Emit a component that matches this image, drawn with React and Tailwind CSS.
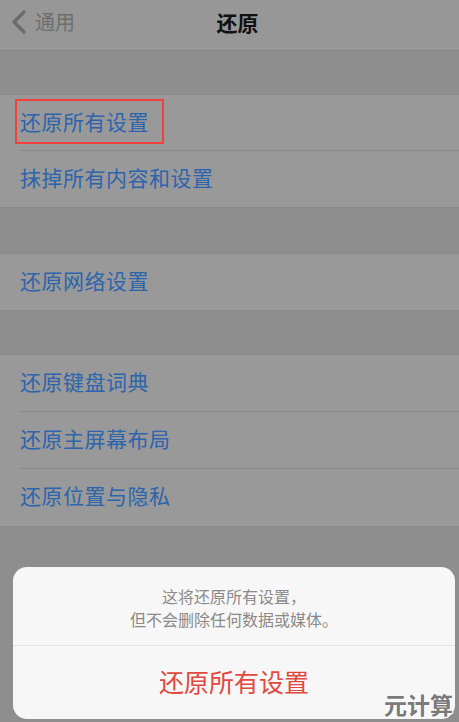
import React from "react";

const font = { fontFamily: '"Noto Sans CJK SC", "Noto Sans", sans-serif' };

function Row({ children, last, boxed, tall }) {
  return (
    <div className={`relative flex items-center pl-[20px] pb-[4px] ${tall ? "h-[57px]" : "h-[56px]"}`}>
      {boxed && (
        <div className="absolute left-[15px] top-[4px] w-[149px] h-[45px] border-[2px] border-[#f2403c]" />
      )}
      <span className="text-[21px] text-[#2c64ad] leading-none tracking-[0.5px]">{children}</span>
      {!last && <div className="absolute left-[19px] right-0 bottom-0 h-px bg-[#8b8b8b]" />}
    </div>
  );
}

function Group({ children }) {
  return <div className="bg-[#999999] border-y border-[#8a8a8a]">{children}</div>;
}

export default function App() {
  return (
    <div className="relative w-[459px] h-[722px] overflow-hidden bg-[#8e8e8f]" style={font}>
      <div className="h-[51px] bg-[#979797] border-b border-[#858585] flex items-center relative pb-[6px]">
        <div className="flex items-center pl-[10px] text-[#6e6e6e]">
          <svg width="18" height="26" viewBox="0 0 18 26" fill="none">
            <path d="M14 3 L4 13 L14 23" stroke="#6b6b6b" strokeWidth="3.2" strokeLinecap="round" strokeLinejoin="round" />
          </svg>
          <span className="ml-[7px] text-[20px] leading-none">通用</span>
        </div>
        <div className="absolute inset-x-0 top-0 h-full flex items-center justify-center pl-[16px] pb-[6px] pointer-events-none">
          <span className="text-[21px] font-semibold text-[#111111] leading-none">还原</span>
        </div>
      </div>
      <div className="h-[43px]" />
      <Group>
        <Row boxed>还原所有设置</Row>
        <Row last>抹掉所有内容和设置</Row>
      </Group>
      <div className="h-[45px]" />
      <Group>
        <Row last>还原网络设置</Row>
      </Group>
      <div className="h-[43px]" />
      <Group>
        <Row tall>还原键盘词典</Row>
        <Row tall>还原主屏幕布局</Row>
        <Row tall last>还原位置与隐私</Row>
      </Group>

      <div className="absolute left-[13px] right-[4px] top-[567px] h-[152px] bg-[#f7f7f7] rounded-[14px] flex flex-col">
        <div className="h-[79px] flex flex-col items-center justify-center pt-[3px] text-[16px] text-[#8a8a8a] leading-[23px] border-b border-[#e2e2e2]">
          <span>这将还原所有设置，</span>
          <span>但不会删除任何数据或媒体。</span>
        </div>
        <div className="flex-1 flex items-center justify-center pb-[2px]">
          <span className="text-[25px] text-[#e2483f] leading-none">还原所有设置</span>
        </div>
      </div>
      <div
        className="absolute right-[6px] bottom-[6px] text-[23px] font-bold text-[#7a7a7a] leading-none"
        style={{ textShadow: "0 0 2px #fff, 0 0 2px #fff, 1px 1px 0 #fff" }}
      >
        元计算
      </div>
    </div>
  );
}
